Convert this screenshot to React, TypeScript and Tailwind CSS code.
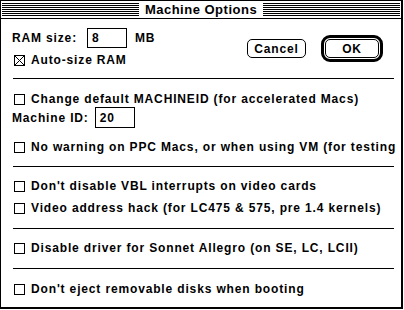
import React from 'react'

function CheckBox({ checked = false }: { checked?: boolean }) {
    return (
        <div className="w-[11px] h-[11px] border border-black bg-white shrink-0 relative">
            {checked && (
                <svg className="absolute inset-0" width="9" height="9" viewBox="0 0 9 9" shapeRendering="crispEdges">
                    <path d="M0 0L9 9M9 0L0 9" stroke="black" strokeWidth="1" />
                </svg>
            )}
        </div>
    )
}

function CheckRow({ label, checked, className = '' }: { label: string; checked?: boolean; className?: string }) {
    return (
        <div className={`flex items-center h-[16px] pl-[13px] ${className}`}>
            <CheckBox checked={checked} />
            <span className="ml-[6px] whitespace-nowrap">{label}</span>
        </div>
    )
}

function Rule({ className = '' }: { className?: string }) {
    return <div className={`ml-[12px] w-[381px] h-px bg-black ${className}`} />
}

export default function App() {
    return (
        <div className="w-[404px] h-[310px] bg-white">
            <div
                className="w-[403px] h-[309px] bg-white border-l border-t border-r-2 border-b-2 border-black text-black text-[12px] font-bold leading-none tracking-[0.85px]"
                style={{ fontFamily: '"Liberation Sans", Arial, sans-serif' }}
            >
                {/* title bar */}
                <div className="h-[18px] border-b border-black flex items-center px-[1px]">
                    <div className="flex-1 h-[13px] flex items-center bg-[repeating-linear-gradient(to_bottom,#000_0px,#000_1px,#fff_1px,#fff_2px)]">
                        <div className="mx-auto bg-white h-[17px] px-[6px] flex items-center text-[13px] tracking-[0.5px]">Machine Options</div>
                    </div>
                </div>

                {/* ram + buttons */}
                <div className="flex items-start mt-[9px] h-[39px]">
                    <div className="w-[246px] pl-[11px]">
                        <div className="flex items-center h-[20px]">
                            <span>RAM size:</span>
                            <div className="ml-[10px] w-[40px] h-[20px] border border-black flex items-center pl-[4px]">8</div>
                            <span className="ml-[8px]">MB</span>
                        </div>
                        <CheckRow label="Auto-size RAM" checked className="mt-[4px] !pl-[2px] h-[14px]" />
                    </div>
                    <button className="mt-[11px] w-[59px] h-[19px] border border-black rounded-[5px] bg-white font-bold tracking-[0.85px]">Cancel</button>
                    <div className="ml-[15px] mt-[7px] w-[62px] h-[27px] border-[3px] border-black rounded-[9px] p-px">
                        <button className="w-full h-full border border-black rounded-[5px] bg-white font-bold tracking-[0.85px]">OK</button>
                    </div>
                </div>

                <Rule className="mt-[11px]" />

                <CheckRow label="Change default MACHINEID (for accelerated Macs)" className="mt-[12px]" />
                <div className="flex items-center h-[21px] pl-[11px]">
                    <span>Machine ID:</span>
                    <div className="ml-[6px] w-[40px] h-[21px] border border-black flex items-center pl-[4px]">20</div>
                </div>
                <CheckRow label="No warning on PPC Macs, or when using VM (for testing" className="mt-[11px]" />

                <Rule className="mt-[11px]" />

                <CheckRow label="Don't disable VBL interrupts on video cards" className="mt-[11px]" />
                <CheckRow label="Video address hack (for LC475 & 575, pre 1.4 kernels)" className="mt-[6px]" />

                <Rule className="mt-[12px]" />

                <CheckRow label="Disable driver for Sonnet Allegro (on SE, LC, LCII)" className="mt-[11px]" />

                <Rule className="mt-[12px]" />

                <CheckRow label="Don't eject removable disks when booting" className="mt-[12px]" />
            </div>
        </div>
    )
}
